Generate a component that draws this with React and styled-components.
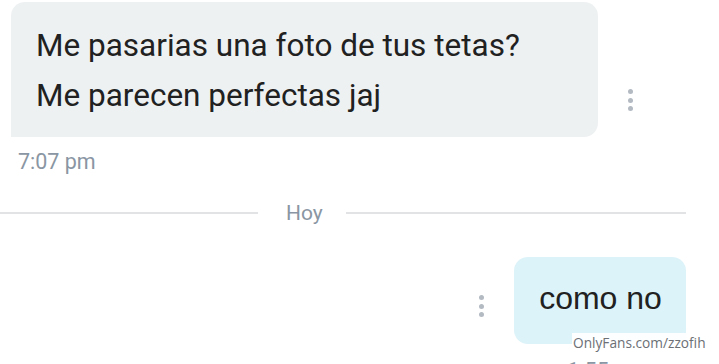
import React from "react";
import styled, { createGlobalStyle } from "styled-components";

const Global = createGlobalStyle`
  html, body { margin: 0; padding: 0; background: #ffffff; }
  body { width: 719px; height: 364px; overflow: hidden; font-family: Roboto, "Liberation Sans", sans-serif; }
`;

const Page = styled.div`
  position: relative;
  width: 719px;
  height: 364px;
  overflow: hidden;
  padding-top: 2px;
  box-sizing: border-box;
`;

const Row = styled.div`
  display: flex;
  align-items: flex-end;
  justify-content: ${(p) => (p.$out ? "flex-end" : "flex-start")};
  padding: ${(p) => (p.$out ? "0 33px 0 0" : "0 0 0 11px")};
`;

const Bubble = styled.div`
  box-sizing: border-box;
  background: ${(p) => (p.$out ? "#dcf3f9" : "#eef1f2")};
  border-radius: ${(p) => (p.$out ? "14px 14px 0 14px" : "14px 14px 14px 0")};
  color: #212121;
`;

const InBubble = styled(Bubble)`
  width: 587px;
  height: 135px;
  padding: 19px 0 0 25px;
  font-family: Roboto, sans-serif;
  font-size: 31.5px;
  line-height: 50px;
`;

const OutBubble = styled(Bubble)`
  width: 172px;
  height: 87px;
  display: flex;
  align-items: center;
  justify-content: center;
  font-family: "Liberation Sans", Arial, sans-serif;
  font-size: 32px;
  padding: 0 0 4px 1px;
`;

const Dots = styled.div`
  display: flex;
  flex-direction: column;
  gap: 3.5px;
  margin: ${(p) => p.$m};
`;

const Dot = styled.span`
  width: 5px;
  height: 5px;
  border-radius: 50%;
  background: #b3bac2;
`;

const Kebab = ({ m }) => (
  <Dots $m={m}>
    <Dot />
    <Dot />
    <Dot />
  </Dots>
);

const Time = styled.div`
  font-family: Roboto, sans-serif;
  font-size: 21.5px;
  line-height: 26px;
  color: #8a96a3;
  margin: 12px 0 0 18px;
`;

const Divider = styled.div`
  display: flex;
  align-items: center;
  margin: 26px 33px 0 0;
  height: 24px;
`;

const Line = styled.div`
  flex: ${(p) => (p.$grow ? "1" : "0 0 258px")};
  height: 2px;
  background: #e2e3e4;
`;

const DayLabel = styled.span`
  font-family: Roboto, sans-serif;
  font-size: 21px;
  color: #8a96a3;
  padding: 0 23px 0 28px;
  line-height: 24px;
`;

const OutWrap = styled.div`
  margin-top: 32px;
`;

const OutTime = styled.div`
  display: flex;
  justify-content: flex-end;
  align-items: center;
  gap: 36px;
  margin: 14px 14px 0 0;
  font-family: Roboto, sans-serif;
  font-size: 21.5px;
  line-height: 26px;
  color: #8a96a3;
`;

const Watermark = styled.div`
  position: absolute;
  left: 572px;
  top: 333px;
  padding: 0 2px 1px 1px;
  background: rgba(255, 255, 255, 0.92);
  font-family: "Open Sans", "DejaVu Sans", sans-serif;
  font-size: 13.7px;
  line-height: 19px;
  color: #6c7075;
`;

export default function App() {
  return (
    <Page>
      <Global />
      <Row>
        <InBubble>
          Me pasarias una foto de tus tetas?
          <br />
          Me parecen perfectas jaj
        </InBubble>
        <Kebab m="0 0 26px 30px" />
      </Row>
      <Time>7:07 pm</Time>
      <Divider>
        <Line />
        <DayLabel>Hoy</DayLabel>
        <Line $grow />
      </Divider>
      <OutWrap>
        <Row $out>
          <Kebab m="0 30px 27px 0" />
          <OutBubble $out>como no</OutBubble>
        </Row>
        <OutTime>
          <span>1:55 pm</span>
          <svg width="24" height="18" viewBox="0 0 24 18" fill="none" stroke="#8a96a3" strokeWidth="2">
            <path d="M2 10l4 4L15 3" />
            <path d="M10 13l1 1L22 3" />
          </svg>
        </OutTime>
      </OutWrap>
      <Watermark>OnlyFans.com/zzofih</Watermark>
    </Page>
  );
}
